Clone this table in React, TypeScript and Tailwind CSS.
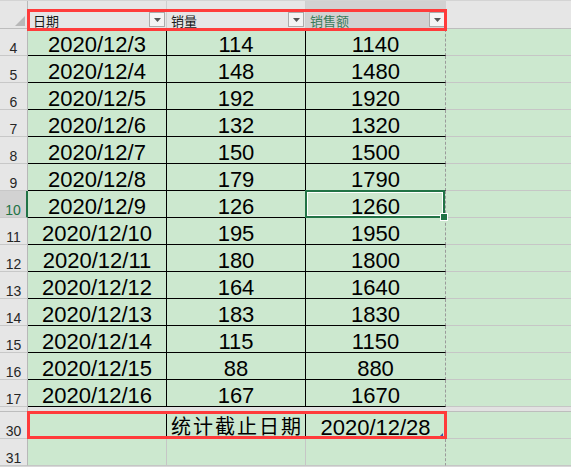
import React from "react";

const rows: [number, string, number, number][] = [
  [4, "2020/12/3", 114, 1140],
  [5, "2020/12/4", 148, 1480],
  [6, "2020/12/5", 192, 1920],
  [7, "2020/12/6", 132, 1320],
  [8, "2020/12/7", 150, 1500],
  [9, "2020/12/8", 179, 1790],
  [10, "2020/12/9", 126, 1260],
  [11, "2020/12/10", 195, 1950],
  [12, "2020/12/11", 180, 1800],
  [13, "2020/12/12", 164, 1640],
  [14, "2020/12/13", 183, 1830],
  [15, "2020/12/14", 115, 1150],
  [16, "2020/12/15", 88, 880],
  [17, "2020/12/16", 167, 1670],
];

const ACTIVE_ROW = 10;

function FilterButton() {
  return (
    <div className="w-[16px] h-[15px] mb-[1px] mr-[1px] shrink-0 border border-[#ababab] bg-[#f4f4f4] flex items-center justify-center">
      <svg width="7" height="4" viewBox="0 0 7 4">
        <polygon points="0,0 7,0 3.5,4" fill="#555" />
      </svg>
    </div>
  );
}

function RowHead({ n, active }: { n: number | string; active?: boolean }) {
  return (
    <div
      className={
        active
          ? "w-[28px] shrink-0 flex items-end justify-center leading-[14px] text-[14px] bg-[#d2d2d2] text-[#217346] border-b border-b-[#c8c8c8] border-r-2 border-r-[#217346]"
          : "w-[28px] shrink-0 flex items-end justify-center leading-[14px] text-[14px] bg-[#e6e6e6] text-[#262626] border-b border-b-[#c8c8c8] border-r border-r-[#b8b8b8]"
      }
    >
      {n}
    </div>
  );
}

export default function App() {
  return (
    <div
      className="relative w-[571px] h-[467px] overflow-hidden bg-[#d8d8d8] select-none"
      style={{ fontFamily: '"Liberation Sans", "Noto Sans CJK SC", sans-serif' }}
    >
      {/* table header row shown in place of column letters */}
      <div className="flex h-[29px] bg-[#e6e6e6] border-t border-t-[#d4d4d4] border-b border-b-[#bdbdbd]">
        <div className="w-[28px] shrink-0 border-r border-r-[#b8b8b8]">
          <svg width="28" height="28" viewBox="0 0 28 28">
            <polygon points="15,25 25,15 25,25" fill="#b8b8b8" />
          </svg>
        </div>
        <div className="w-[139px] shrink-0 flex items-end border-r border-r-[#cfcfcf]">
          <span className="pl-[5px] pb-[1px] text-[13px] leading-[13px] text-[#1a1a1a]" style={{ fontFamily: '"Noto Sans CJK SC", sans-serif' }}>
            日期
          </span>
          <div className="ml-auto">
            <FilterButton />
          </div>
        </div>
        <div className="w-[139px] shrink-0 flex items-end border-r border-r-[#cfcfcf]">
          <span className="pl-[4px] pb-[1px] text-[13px] leading-[13px] text-[#1a1a1a]" style={{ fontFamily: '"Noto Sans CJK SC", sans-serif' }}>
            销量
          </span>
          <div className="ml-auto">
            <FilterButton />
          </div>
        </div>
        <div className="w-[140px] shrink-0 flex items-end bg-[#d2d2d2]">
          <span className="pl-[4px] pb-[1px] text-[13px] leading-[13px] text-[#3a7b5a]" style={{ fontFamily: '"Noto Sans CJK SC", sans-serif' }}>
            销售额
          </span>
          <div className="ml-auto">
            <FilterButton />
          </div>
        </div>
        <div className="flex-1" />
      </div>

      {/* data rows */}
      {rows.map(([n, date, qty, amount]) => (
        <div key={n} className="flex h-[27px] text-[22px] leading-[18px] text-black">
          <RowHead n={n} active={n === ACTIVE_ROW} />
          <div className="w-[139px] shrink-0 bg-[#cce8cf] flex items-end justify-center pb-[1px] border-r border-b border-black">
            {date}
          </div>
          <div className="w-[139px] shrink-0 bg-[#cce8cf] flex items-end justify-center pb-[1px] border-r border-b border-black">
            {qty}
          </div>
          <div className="relative w-[140px] shrink-0 bg-[#cce8cf] flex items-end justify-center pb-[1px] border-b border-b-black border-r border-r-[#9a9a9a] [border-right-style:dashed]">
            {amount}
            {n === ACTIVE_ROW && (
              <div className="absolute -left-[1px] -top-[1px] -bottom-[1px] right-0 z-10 border-2 border-[#217346] shadow-[inset_0_0_0_1px_#ffffff]">
                <div className="absolute -right-[4px] -bottom-[4px] w-[6px] h-[6px] bg-[#217346] outline outline-1 outline-white" />
              </div>
            )}
          </div>
          <div className="flex-1 bg-[#cce8cf] border-b border-b-[#c6c6c6]" />
        </div>
      ))}

      {/* hidden rows 18-29 */}
      <div className="flex h-[5px]">
        <div className="w-[28px] shrink-0 bg-[#e6e6e6] border-r border-r-[#b8b8b8] border-b border-b-[#bdbdbd]" />
        <div className="flex-1 bg-[#e2e2e2] border-b border-b-[#bdbdbd]" />
      </div>

      {/* row 30 */}
      <div className="flex h-[27px] text-[22px] leading-[18px] text-black">
        <RowHead n={30} />
        <div className="w-[139px] shrink-0 bg-[#cce8cf] border-r border-r-black border-b border-b-[#c6c6c6]" />
        <div className="w-[139px] shrink-0 bg-[#cce8cf] flex items-end justify-center pb-[2px] pl-[2px] border-r border-r-black border-b border-b-[#c6c6c6] text-[20px] tracking-[2px]">
          统计截止日期
        </div>
        <div className="relative w-[140px] shrink-0 bg-[#cce8cf] flex items-end justify-center pb-[1px] border-b border-b-[#c6c6c6] border-r border-r-[#9a9a9a] [border-right-style:dashed]">
          2020/12/28
          <svg className="absolute right-[2px] bottom-[2px]" width="3" height="3" viewBox="0 0 3 3">
            <polygon points="3,0 3,3 0,3" fill="#3b4fa0" />
          </svg>
        </div>
        <div className="flex-1 bg-[#cce8cf] border-b border-b-[#c6c6c6]" />
      </div>

      {/* row 31 */}
      <div className="flex h-[27px] text-[22px] leading-[18px]">
        <RowHead n={31} />
        <div className="w-[139px] shrink-0 bg-[#cce8cf] border-r border-b border-[#c6c6c6]" />
        <div className="w-[139px] shrink-0 bg-[#cce8cf] border-r border-b border-[#c6c6c6]" />
        <div className="w-[140px] shrink-0 bg-[#cce8cf] border-b border-b-[#c6c6c6] border-r border-r-[#9a9a9a] [border-right-style:dashed]" />
        <div className="flex-1 bg-[#cce8cf] border-b border-b-[#c6c6c6]" />
      </div>

      {/* red annotation boxes */}
      <div className="absolute left-[27px] top-[9px] w-[420px] h-[22px] border-[3px] border-[#ff3b3b] z-20 pointer-events-none" />
      <div className="absolute left-[27px] top-[411px] w-[420px] h-[28px] border-[3px] border-[#ff3b3b] z-20 pointer-events-none" />
    </div>
  );
}
